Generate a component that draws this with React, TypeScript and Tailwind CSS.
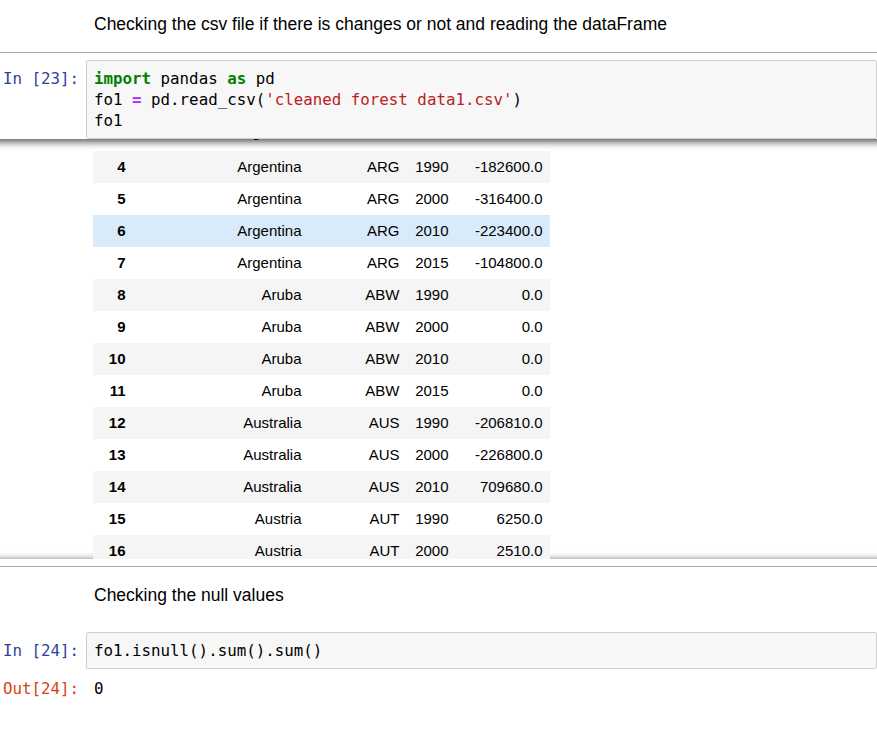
import React from "react";

const rows: [string, string, string, string, string][] = [
  ["3", "Argentina", "ARG", "1980", "0.0"],
  ["4", "Argentina", "ARG", "1990", "-182600.0"],
  ["5", "Argentina", "ARG", "2000", "-316400.0"],
  ["6", "Argentina", "ARG", "2010", "-223400.0"],
  ["7", "Argentina", "ARG", "2015", "-104800.0"],
  ["8", "Aruba", "ABW", "1990", "0.0"],
  ["9", "Aruba", "ABW", "2000", "0.0"],
  ["10", "Aruba", "ABW", "2010", "0.0"],
  ["11", "Aruba", "ABW", "2015", "0.0"],
  ["12", "Australia", "AUS", "1990", "-206810.0"],
  ["13", "Australia", "AUS", "2000", "-226800.0"],
  ["14", "Australia", "AUS", "2010", "709680.0"],
  ["15", "Austria", "AUT", "1990", "6250.0"],
  ["16", "Austria", "AUT", "2000", "2510.0"],
];

const mono = "font-['DejaVu_Sans_Mono',monospace] text-[15.8px] leading-[21px]";
const sans = "font-['Liberation_Sans',Arial,sans-serif]";

function rowBg(i: number, idx: string) {
  if (idx === "6") return "bg-[#d9ebfb]";
  return i % 2 === 1 ? "bg-[#f5f5f5]" : "bg-transparent";
}

function Cell({ first, children }: { first: boolean; children: React.ReactNode }) {
  return <span className={first ? "relative -top-[3px]" : ""}>{children}</span>;
}

export default function App() {
  return (
    <div className="w-[877px] h-[729px] overflow-hidden bg-white text-black">
      {/* Markdown 1 */}
      <div className={`${sans} text-[17.5px] leading-[25px] pl-[94px] pt-[12px] h-[52px]`}>
        Checking the csv file if there is changes or not and reading the dataFrame
      </div>
      <div className="h-px bg-[#ababab]" />
      {/* Code cell 1 */}
      <div className="flex pt-[7px]">
        <div className={`${mono} w-[86px] shrink-0 text-right pr-[7px] pt-[8px] text-[#303F9F]`}>In&nbsp;[23]:</div>
        <div className={`${mono} flex-1 border border-[#cfcfcf] rounded-[2px] bg-[#f7f7f7] pl-[7px] py-[7px] whitespace-pre`}>
          <div>
            <span className="text-[#008000] font-bold">import</span> pandas <span className="text-[#008000] font-bold">as</span> pd
          </div>
          <div>
            fo1 <span className="text-[#AA22FF] font-bold">=</span> pd.read_csv(<span className="text-[#BA2121]">'cleaned forest data1.csv'</span>)
          </div>
          <div>fo1</div>
        </div>
      </div>
      {/* Output scroll */}
      <div className="overflow-hidden">
        <div className="-mx-[20px] h-[420px] overflow-hidden shadow-[inset_0_2px_8px_rgba(0,0,0,0.8)]">
          <table className={`${sans} text-[15px] ml-[113px] -mt-[20px] border-collapse`}>
            <tbody>
              {rows.map((r, i) => (
                <tr key={r[0]} className={`h-[32px] ${rowBg(i, r[0])}`}>
                  <th className="w-[40px] text-right pr-[7.5px] font-bold"><Cell first={i === 0}>{r[0]}</Cell></th>
                  <td className="w-[176px] text-right pr-[7.5px]"><Cell first={i === 0}>{r[1]}</Cell></td>
                  <td className="w-[98px] text-right pr-[7.5px]"><Cell first={i === 0}>{r[2]}</Cell></td>
                  <td className="w-[49px] text-right pr-[7.5px]"><Cell first={i === 0}>{r[3]}</Cell></td>
                  <td className="w-[94px] text-right pr-[7.5px]"><Cell first={i === 0}>{r[4]}</Cell></td>
                </tr>
              ))}
            </tbody>
          </table>
        </div>
      </div>
      <div className="h-[7px]" />
      <div className="h-px bg-[#ababab]" />
      {/* Markdown 2 */}
      <div className={`${sans} text-[17.5px] leading-[25px] pl-[94px] pt-[16px] h-[65px]`}>
        Checking the null values
      </div>
      {/* Code cell 2 */}
      <div className="flex">
        <div className={`${mono} w-[86px] shrink-0 text-right pr-[7px] pt-[8px] text-[#303F9F]`}>In&nbsp;[24]:</div>
        <div className={`${mono} flex-1 border border-[#cfcfcf] rounded-[2px] bg-[#f7f7f7] pl-[7px] py-[7px] whitespace-pre`}>
          fo1.isnull().sum().sum()
        </div>
      </div>
      <div className="flex pt-[9px]">
        <div className={`${mono} w-[86px] shrink-0 text-right pr-[7px] text-[#D84315]`}>Out[24]:</div>
        <div className={`${mono} pl-[8px]`}>0</div>
      </div>
    </div>
  );
}
